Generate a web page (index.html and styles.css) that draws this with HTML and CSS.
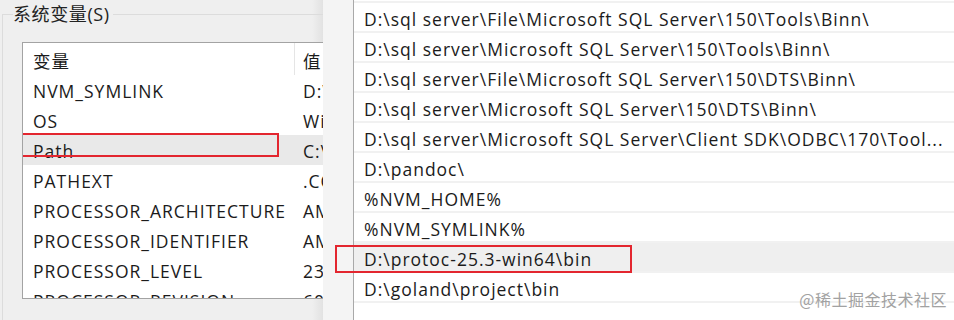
FILE: index.html
```html
<!DOCTYPE html>
<html lang="zh-CN">
<head>
  <meta charset="UTF-8" />
  <title>环境变量</title>
  <link rel="stylesheet" href="styles.css">
</head>
<body>

<div class="screen">
  <!-- 左边：系统变量 -->
  <div class="left-pane">
    <fieldset class="group">
      <legend>系统变量(S)</legend>
      <div class="listbox">
        <div class="row head">
          <div class="col-name">变量</div>
          <div class="col-value">值</div>
        </div>
        <div class="row"><div class="col-name">NVM_SYMLINK</div><div class="col-value">D:\</div></div>
        <div class="row"><div class="col-name">OS</div><div class="col-value">Wi</div></div>
        <div class="row picked">
          <div class="col-name">Path</div><div class="col-value">C:\</div>
          <span class="mark mark-path"></span>
        </div>
        <div class="row"><div class="col-name">PATHEXT</div><div class="col-value">.CO</div></div>
        <div class="row"><div class="col-name">PROCESSOR_ARCHITECTURE</div><div class="col-value">AM</div></div>
        <div class="row"><div class="col-name">PROCESSOR_IDENTIFIER</div><div class="col-value">AM</div></div>
        <div class="row"><div class="col-name">PROCESSOR_LEVEL</div><div class="col-value">23</div></div>
        <div class="row"><div class="col-name">PROCESSOR_REVISION</div><div class="col-value">60</div></div>
      </div>
    </fieldset>
  </div>

  <!-- 右边：编辑环境变量 -->
  <div class="right-pane">
    <div class="pathlist">
      <div class="item">C:\Program Files (x86)\Microsoft SQL Server\150\Tools\Binn\</div>
      <div class="item">D:\sql server\File\Microsoft SQL Server\150\Tools\Binn\</div>
      <div class="item">D:\sql server\Microsoft SQL Server\150\Tools\Binn\</div>
      <div class="item">D:\sql server\File\Microsoft SQL Server\150\DTS\Binn\</div>
      <div class="item">D:\sql server\Microsoft SQL Server\150\DTS\Binn\</div>
      <div class="item">D:\sql server\Microsoft SQL Server\Client SDK\ODBC\170\Tool...</div>
      <div class="item">D:\pandoc\</div>
      <div class="item">%NVM_HOME%</div>
      <div class="item">%NVM_SYMLINK%</div>
      <div class="item picked">
        D:\protoc-25.3-win64\bin
        <span class="mark mark-protoc"></span>
      </div>
      <div class="item">D:\goland\project\bin</div>
      <div class="item"></div>
    </div>
  </div>

  <div class="watermark">@稀土掘金技术社区</div>
</div>

</body>
</html>
```

FILE: styles.css
```css
* {
  box-sizing: border-box;
}
body {
  margin: 0;
  font-family: "Open Sans", "Noto Sans CJK SC", sans-serif;
  color: #1b1b1b;
  background: #f0f0f0;
}

.screen {
  position: relative;
  display: flex;
  width: 954px;
  height: 320px;
  overflow: hidden;
}

/* ---- left pane ---- */
.left-pane {
  width: 323px;
  flex-shrink: 0;
  overflow: hidden;
  background: linear-gradient(to right, #efefef 312px, #e2e2e2 323px);
}

.group {
  margin: 4px 0 0 2px;
  padding: 0 0 0 19px;
  border: 1px solid #dcdcdc;
  border-right: none;
  min-width: 0;
  height: 400px;
}

.group legend {
  margin-left: -9px;
  padding: 0 3px 0 0;
  font-size: 18px;
  line-height: 20px;
  letter-spacing: 0.6px;
  color: #222;
}

.listbox {
  margin-top: 18px;
  width: 340px;
  height: 257px;
  background: #fff;
  border: 1px solid #a3a3a3;
  overflow: hidden;
}

.row {
  position: relative;
  display: flex;
  height: 30px;
  padding-top: 2px;
  align-items: center;
  font-size: 17.5px;
  letter-spacing: 1px;
  white-space: nowrap;
}

.row.head {
  height: 32px;
  padding-top: 0;
}

.row.picked {
  background: #e9e9e9;
}

.col-name {
  width: 272px;
  padding-left: 10px;
  flex-shrink: 0;
}

.col-value {
  padding-left: 8px;
}

.head .col-name {
  height: 100%;
  display: flex;
  align-items: center;
  padding-top: 2px;
  border-right: 1px solid #e5e5e5;
}

.head .col-value {
  padding-top: 2px;
}

/* ---- right pane ---- */
.right-pane {
  flex: 1;
  padding-left: 30px;
  background: #f4f4f4;
}

.pathlist {
  margin-top: -27px;
  background: #fff;
  border-left: 1px solid #a9a9a9;
  height: 360px;
}

.item {
  position: relative;
  height: 30px;
  padding: 3px 0 0 10px;
  display: flex;
  align-items: center;
  font-size: 17.5px;
  letter-spacing: 1px;
  white-space: nowrap;
  border-bottom: 2px solid #f1f1f1;
}

.item.picked {
  background: #efefef;
}

/* 红框标注 */
.mark {
  position: absolute;
  border: 2px solid #e3262f;
}

.mark-path {
  left: -4px;
  top: -2px;
  width: 260px;
  height: 24px;
}

.mark-protoc {
  left: -19px;
  top: 2px;
  width: 297px;
  height: 28px;
}

.watermark {
  position: absolute;
  right: 7px;
  bottom: 9px;
  font-family: "Noto Sans CJK SC", sans-serif;
  font-size: 16px;
  color: #a2a2a2;
  letter-spacing: 0.5px;
}
```
